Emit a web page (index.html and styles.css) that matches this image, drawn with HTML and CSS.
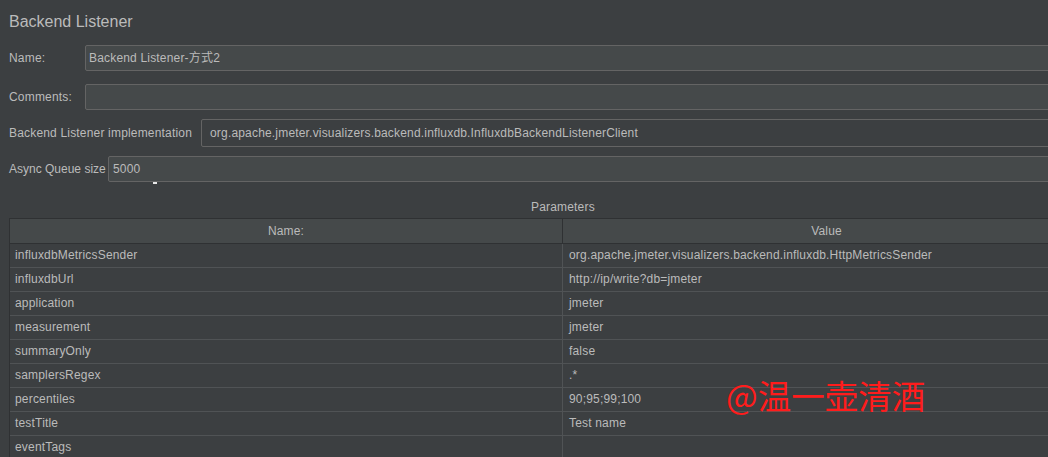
FILE: index.html
```html
<!DOCTYPE html>
<html>
<head>
<meta charset="utf-8">
<link rel="stylesheet" href="styles.css">
</head>
<body>
<div class="page">
  <div class="title">Backend Listener</div>
  <div class="row row-name">
    <label class="lbl lbl-name">Name:</label>
    <div class="field">Backend Listener-方式2</div>
  </div>
  <div class="row row-comments">
    <label class="lbl lbl-name">Comments:</label>
    <div class="field"></div>
  </div>
  <div class="row row-impl">
    <label class="lbl lbl-impl">Backend Listener implementation</label>
    <div class="field combo">org.apache.jmeter.visualizers.backend.influxdb.InfluxdbBackendListenerClient</div>
  </div>
  <div class="row row-async">
    <label class="lbl lbl-async">Async Queue size</label>
    <div class="field async">5000</div>
  </div>
  <div class="grip"><span></span></div>
  <div class="params-title">Parameters</div>
  <div class="table">
    <div class="th">Name:</div><div class="th">Value</div>
    <div class="td">influxdbMetricsSender</div><div class="td">org.apache.jmeter.visualizers.backend.influxdb.HttpMetricsSender</div>
    <div class="td">influxdbUrl</div><div class="td">http://ip/write?db=jmeter</div>
    <div class="td">application</div><div class="td">jmeter</div>
    <div class="td">measurement</div><div class="td">jmeter</div>
    <div class="td">summaryOnly</div><div class="td">false</div>
    <div class="td">samplersRegex</div><div class="td">.*</div>
    <div class="td">percentiles</div><div class="td">90;95;99;100</div>
    <div class="td">testTitle</div><div class="td">Test name</div>
    <div class="td">eventTags</div><div class="td"></div>
  </div>
  <div class="watermark">@温一壶清酒</div>
</div>
</body>
</html>
```

FILE: styles.css
```css
html, body {
  margin: 0;
  padding: 0;
  background: #3c3f41;
  overflow: hidden;
}
body {
  width: 1048px;
  height: 457px;
  font-family: "Liberation Sans", Arial, "Noto Sans CJK SC", sans-serif;
  font-size: 12px;
  letter-spacing: 0.18px;
  color: #bbbbbb;
}
.page {
  position: relative;
  width: 1048px;
  height: 457px;
  overflow: hidden;
}
.title {
  font-size: 16px;
  letter-spacing: 0;
  line-height: 20px;
  padding: 12px 0 0 9px;
  height: 33px;
  box-sizing: border-box;
}
.row {
  display: flex;
  align-items: center;
  width: 1120px;
  padding-left: 9px;
}
.lbl {
  flex: none;
}
.lbl-name { width: 76px; }
.lbl-impl { width: 192px; }
.lbl-async { width: 99px; letter-spacing: 0; }
.field {
  flex: 1;
  height: 26px;
  box-sizing: border-box;
  border: 1px solid #646464;
  border-radius: 2px;
  background: #45494a;
  line-height: 24px;
  padding-left: 3px;
}
.row-name { margin-top: 12px; }
.row-comments { margin-top: 13px; }
.row-impl { margin-top: 9px; }
.row-impl .field {
  height: 28px;
  line-height: 26px;
  background: #3c3f41;
  padding-left: 8px;
}
.row-async { margin-top: 9px; }
.field.async { height: 26px; padding-left: 4px; }
.grip {
  height: 4px;
  position: relative;
}
.grip span {
  position: absolute;
  left: 153px;
  top: 0;
  width: 4px;
  height: 2px;
  background: #e8e8e8;
}
.params-title {
  padding-left: 531px;
  line-height: 16px;
  margin-top: 13px;
  height: 19px;
}
.table {
  margin-left: 9px;
  width: 1080px;
  display: grid;
  grid-template-columns: 553px 1fr;
  grid-template-rows: 25px;
  grid-auto-rows: 24px;
  border-left: 1px solid #2f3133;
  border-top: 1px solid #2f3133;
}
.th {
  background: #45494a;
  text-align: center;
  height: 25px;
  line-height: 25px;
  border-bottom: 1px solid #2f3133;
  box-sizing: border-box;
}
.table .th:first-child {
  border-right: 1px solid #2f3133;
}
.td {
  box-sizing: border-box;
  border-bottom: 1px solid #505355;
  line-height: 23px;
  padding-left: 5px;
  white-space: nowrap;
}
.td:nth-child(odd) {
  border-right: 1px solid #505355;
}
.td:nth-child(even) {
  padding-left: 6px;
}
.watermark {
  position: absolute;
  left: 726px;
  top: 373px;
  font-family: "Noto Sans CJK SC", sans-serif;
  font-size: 33.5px;
  letter-spacing: 0;
  line-height: 44px;
  color: #ff1c1c;
}
```
